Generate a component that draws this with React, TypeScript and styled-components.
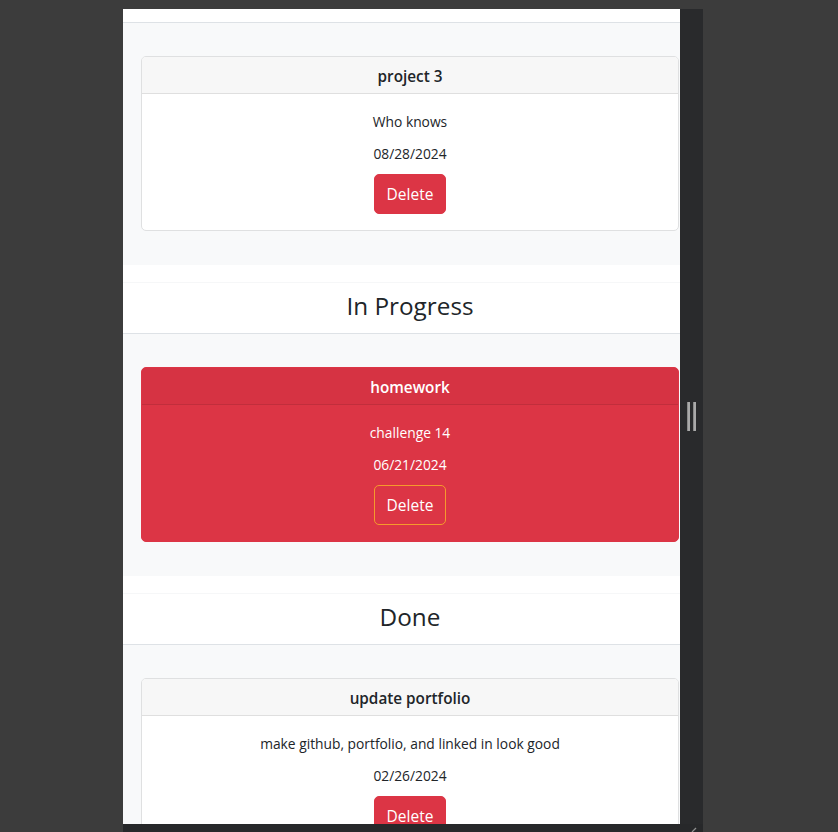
import React, { useLayoutEffect, useRef } from "react";
import styled, { createGlobalStyle, css } from "styled-components";

const GlobalStyle = createGlobalStyle`
  html, body {
    margin: 0;
    padding: 0;
    background: #3c3c3c;
  }
  #root {
    font-family: "Open Sans", "Noto Sans", sans-serif;
  }
`;

const Device = styled.div`
  display: grid;
  grid-template-columns: 557px 23px;
  grid-template-rows: 815px 8px;
  width: 580px;
  margin: 9px 0 0 123px;
`;

const Page = styled.div`
  grid-column: 1;
  grid-row: 1;
  background: #ffffff;
  overflow: hidden;
  color: #212529;
`;

const Content = styled.div`
  width: 574px;
  padding-bottom: 240px;
`;

const ScrollStrip = styled.div`
  grid-column: 2;
  grid-row: 1;
  background: #292a2c;
  display: flex;
  align-items: center;
  justify-content: center;
  gap: 3px;
  padding-right: 1px;
`;

const GripLine = styled.span`
  width: 2px;
  height: 29px;
  background: #a9a9a9;
  border-left: 1px solid #8a8a8a;
`;

const BottomBar = styled.div`
  grid-column: 1 / span 2;
  grid-row: 2;
  background: #27282a;
  display: flex;
  justify-content: flex-end;
  align-items: flex-end;
  padding-right: 6px;
`;

const Section = styled.section`
  & + & {
    margin-top: 17px;
  }
`;

const SectionHeader = styled.header`
  box-sizing: content-box;
  height: 45px;
  padding-bottom: 5px;
  border-top: 1px solid #f6f7f8;
  border-bottom: 1px solid #dee2e6;
  background: #ffffff;
  display: flex;
  align-items: center;
  justify-content: center;
`;

const Heading = styled.h2`
  margin: 0;
  font-size: 24.3px;
  font-weight: 400;
  line-height: 1.2;
`;

const SectionBody = styled.div`
  background: #f8f9fa;
  padding: 33px 18px 34px;
  display: flex;
  flex-direction: column;
  gap: 24px;
`;

type Variant = "light" | "danger";

const Card = styled.article<{ $variant: Variant }>`
  border-radius: 5px;
  overflow: hidden;
  ${({ $variant }) =>
    $variant === "danger"
      ? css`
          background: #dc3545;
          border: 1px solid #dc3545;
          color: #ffffff;
        `
      : css`
          background: #ffffff;
          border: 1px solid #dfe0e1;
          color: #212529;
        `}
`;

const CardHeader = styled.h3<{ $variant: Variant }>`
  margin: 0;
  padding: 7px 16px 5px;
  font-size: 15.3px;
  line-height: 24px;
  font-weight: 600;
  text-align: center;
  ${({ $variant }) =>
    $variant === "danger"
      ? css`
          background: #d63343;
          border-bottom: 1px solid #c12e3c;
        `
      : css`
          background: #f7f7f7;
          border-bottom: 1px solid #dfdfdf;
        `}
`;

const CardBody = styled.div`
  padding: 17px 16px 16px;
  display: flex;
  flex-direction: column;
  align-items: center;
  text-align: center;
`;

const Text = styled.p<{ $gap: number }>`
  margin: 0 0 ${({ $gap }) => $gap}px;
  font-size: 13.8px;
  line-height: 21px;
`;

const DeleteButton = styled.button<{ $variant: Variant }>`
  height: 40px;
  padding: 0 12px;
  border-radius: 5px;
  font-family: inherit;
  font-size: 15.5px;
  line-height: 24px;
  color: #ffffff;
  cursor: pointer;
  ${({ $variant }) =>
    $variant === "danger"
      ? css`
          background: transparent;
          border: 1px solid #f59a2c;
        `
      : css`
          background: #dc3545;
          border: 1px solid #dc3545;
        `}
`;

type Task = {
  title: string;
  description: string;
  date: string;
  variant: Variant;
};

type Column = { name: string; tasks: Task[] };

const columns: Column[] = [
  {
    name: "To Do",
    tasks: [
      { title: "project 3", description: "Who knows", date: "08/28/2024", variant: "light" },
    ],
  },
  {
    name: "In Progress",
    tasks: [
      { title: "homework", description: "challenge 14", date: "06/21/2024", variant: "danger" },
    ],
  },
  {
    name: "Done",
    tasks: [
      {
        title: "update portfolio",
        description: "make github, portfolio, and linked in look good",
        date: "02/26/2024",
        variant: "light",
      },
    ],
  },
];

function TaskCard({ task }: { task: Task }) {
  return (
    <Card $variant={task.variant}>
      <CardHeader $variant={task.variant}>{task.title}</CardHeader>
      <CardBody>
        <Text $gap={11}>{task.description}</Text>
        <Text $gap={10}>{task.date}</Text>
        <DeleteButton $variant={task.variant}>Delete</DeleteButton>
      </CardBody>
    </Card>
  );
}

export default function App() {
  const pageRef = useRef<HTMLDivElement>(null);
  const firstBodyRef = useRef<HTMLDivElement>(null);

  useLayoutEffect(() => {
    const page = pageRef.current;
    const body = firstBodyRef.current;
    if (page && body) {
      page.scrollTop = body.offsetTop - page.offsetTop - 14;
    }
  }, []);

  return (
    <>
      <GlobalStyle />
      <Device>
        <Page ref={pageRef}>
          <Content>
            {columns.map((col, i) => (
              <Section key={col.name}>
                <SectionHeader>
                  <Heading>{col.name}</Heading>
                </SectionHeader>
                <SectionBody ref={i === 0 ? firstBodyRef : undefined}>
                  {col.tasks.map((t) => (
                    <TaskCard key={t.title} task={t} />
                  ))}
                </SectionBody>
              </Section>
            ))}
          </Content>
        </Page>
        <ScrollStrip>
          <GripLine />
          <GripLine />
        </ScrollStrip>
        <BottomBar>
          <svg width="6" height="6" viewBox="0 0 6 6">
            <line x1="1" y1="6" x2="5" y2="2" stroke="#8f8f8f" strokeWidth="1.2" />
          </svg>
        </BottomBar>
      </Device>
    </>
  );
}
